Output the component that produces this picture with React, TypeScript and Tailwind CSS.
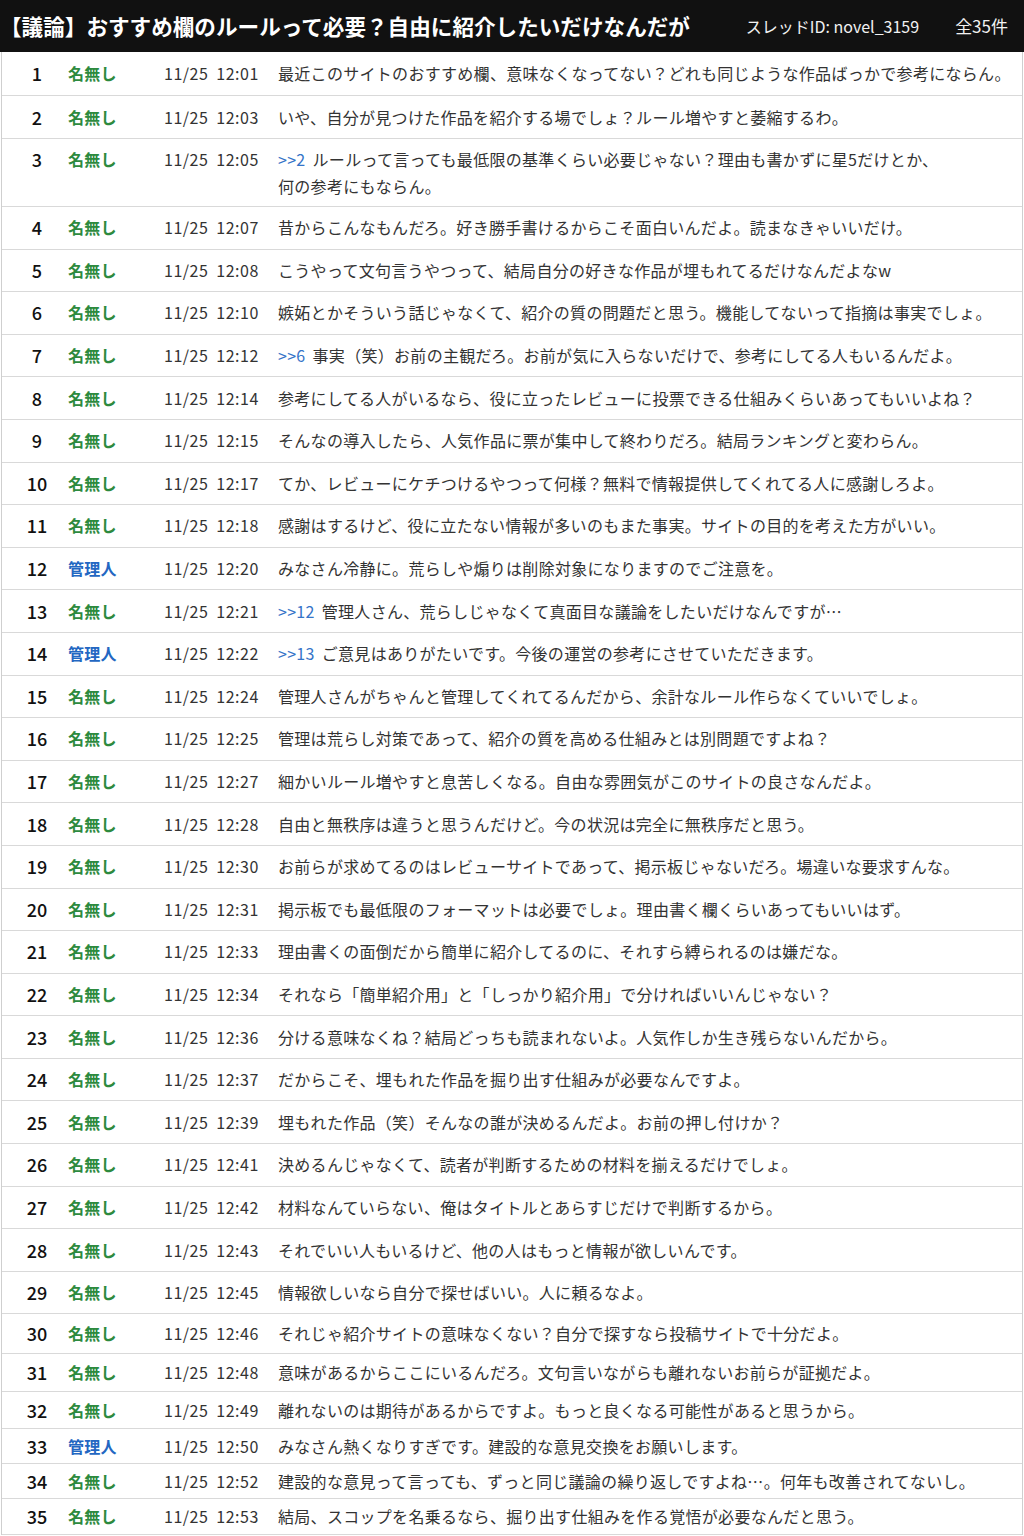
import React from "react";

type Post = {
  no: number;
  name: "名無し" | "管理人";
  time: string;
  anchor?: string;
  body: string;
  h: string;
};

const posts: Post[] = [
  { no: 1, name: "名無し", time: "12:01", body: "最近このサイトのおすすめ欄、意味なくなってない？どれも同じような作品ばっかで参考にならん。", h: "h-[44px]" },
  { no: 2, name: "名無し", time: "12:03", body: "いや、自分が見つけた作品を紹介する場でしょ？ルール増やすと萎縮するわ。", h: "h-[43px]" },
  { no: 3, name: "名無し", time: "12:05", anchor: ">>2", body: "ルールって言っても最低限の基準くらい必要じゃない？理由も書かずに星5だけとか、\n何の参考にもならん。", h: "h-[68px]" },
  { no: 4, name: "名無し", time: "12:07", body: "昔からこんなもんだろ。好き勝手書けるからこそ面白いんだよ。読まなきゃいいだけ。", h: "h-[42.6px]" },
  { no: 5, name: "名無し", time: "12:08", body: "こうやって文句言うやつって、結局自分の好きな作品が埋もれてるだけなんだよなw", h: "h-[42.6px]" },
  { no: 6, name: "名無し", time: "12:10", body: "嫉妬とかそういう話じゃなくて、紹介の質の問題だと思う。機能してないって指摘は事実でしょ。", h: "h-[42.6px]" },
  { no: 7, name: "名無し", time: "12:12", anchor: ">>6", body: "事実（笑）お前の主観だろ。お前が気に入らないだけで、参考にしてる人もいるんだよ。", h: "h-[42.6px]" },
  { no: 8, name: "名無し", time: "12:14", body: "参考にしてる人がいるなら、役に立ったレビューに投票できる仕組みくらいあってもいいよね？", h: "h-[42.6px]" },
  { no: 9, name: "名無し", time: "12:15", body: "そんなの導入したら、人気作品に票が集中して終わりだろ。結局ランキングと変わらん。", h: "h-[42.6px]" },
  { no: 10, name: "名無し", time: "12:17", body: "てか、レビューにケチつけるやつって何様？無料で情報提供してくれてる人に感謝しろよ。", h: "h-[42.6px]" },
  { no: 11, name: "名無し", time: "12:18", body: "感謝はするけど、役に立たない情報が多いのもまた事実。サイトの目的を考えた方がいい。", h: "h-[42.6px]" },
  { no: 12, name: "管理人", time: "12:20", body: "みなさん冷静に。荒らしや煽りは削除対象になりますのでご注意を。", h: "h-[42.6px]" },
  { no: 13, name: "名無し", time: "12:21", anchor: ">>12", body: "管理人さん、荒らしじゃなくて真面目な議論をしたいだけなんですが…", h: "h-[42.6px]" },
  { no: 14, name: "管理人", time: "12:22", anchor: ">>13", body: "ご意見はありがたいです。今後の運営の参考にさせていただきます。", h: "h-[42.6px]" },
  { no: 15, name: "名無し", time: "12:24", body: "管理人さんがちゃんと管理してくれてるんだから、余計なルール作らなくていいでしょ。", h: "h-[42.6px]" },
  { no: 16, name: "名無し", time: "12:25", body: "管理は荒らし対策であって、紹介の質を高める仕組みとは別問題ですよね？", h: "h-[42.6px]" },
  { no: 17, name: "名無し", time: "12:27", body: "細かいルール増やすと息苦しくなる。自由な雰囲気がこのサイトの良さなんだよ。", h: "h-[42.6px]" },
  { no: 18, name: "名無し", time: "12:28", body: "自由と無秩序は違うと思うんだけど。今の状況は完全に無秩序だと思う。", h: "h-[42.6px]" },
  { no: 19, name: "名無し", time: "12:30", body: "お前らが求めてるのはレビューサイトであって、掲示板じゃないだろ。場違いな要求すんな。", h: "h-[42.6px]" },
  { no: 20, name: "名無し", time: "12:31", body: "掲示板でも最低限のフォーマットは必要でしょ。理由書く欄くらいあってもいいはず。", h: "h-[42.6px]" },
  { no: 21, name: "名無し", time: "12:33", body: "理由書くの面倒だから簡単に紹介してるのに、それすら縛られるのは嫌だな。", h: "h-[42.6px]" },
  { no: 22, name: "名無し", time: "12:34", body: "それなら「簡単紹介用」と「しっかり紹介用」で分ければいいんじゃない？", h: "h-[42.6px]" },
  { no: 23, name: "名無し", time: "12:36", body: "分ける意味なくね？結局どっちも読まれないよ。人気作しか生き残らないんだから。", h: "h-[42.6px]" },
  { no: 24, name: "名無し", time: "12:37", body: "だからこそ、埋もれた作品を掘り出す仕組みが必要なんですよ。", h: "h-[42.6px]" },
  { no: 25, name: "名無し", time: "12:39", body: "埋もれた作品（笑）そんなの誰が決めるんだよ。お前の押し付けか？", h: "h-[42.6px]" },
  { no: 26, name: "名無し", time: "12:41", body: "決めるんじゃなくて、読者が判断するための材料を揃えるだけでしょ。", h: "h-[42.6px]" },
  { no: 27, name: "名無し", time: "12:42", body: "材料なんていらない、俺はタイトルとあらすじだけで判断するから。", h: "h-[42.6px]" },
  { no: 28, name: "名無し", time: "12:43", body: "それでいい人もいるけど、他の人はもっと情報が欲しいんです。", h: "h-[42.6px]" },
  { no: 29, name: "名無し", time: "12:45", body: "情報欲しいなら自分で探せばいい。人に頼るなよ。", h: "h-[42.6px]" },
  { no: 30, name: "名無し", time: "12:46", body: "それじゃ紹介サイトの意味なくない？自分で探すなら投稿サイトで十分だよ。", h: "h-[40px]" },
  { no: 31, name: "名無し", time: "12:48", body: "意味があるからここにいるんだろ。文句言いながらも離れないお前らが証拠だよ。", h: "h-[38px]" },
  { no: 32, name: "名無し", time: "12:49", body: "離れないのは期待があるからですよ。もっと良くなる可能性があると思うから。", h: "h-[37px]" },
  { no: 33, name: "管理人", time: "12:50", body: "みなさん熱くなりすぎです。建設的な意見交換をお願いします。", h: "h-[35px]" },
  { no: 34, name: "名無し", time: "12:52", body: "建設的な意見って言っても、ずっと同じ議論の繰り返しですよね…。何年も改善されてないし。", h: "h-[35px]" },
  { no: 35, name: "名無し", time: "12:53", body: "結局、スコップを名乗るなら、掘り出す仕組みを作る覚悟が必要なんだと思う。", h: "h-[36px]" },
];

function PostRow({ p }: { p: Post }) {
  const lines = p.body.split("\n");
  const multi = lines.length > 1;
  return (
    <div
      className={`${p.h} flex ${multi ? "items-start pt-[7px]" : "items-center"} border-b border-[#d9d9d9] leading-[27px]`}
    >
      <div className="w-[66px] shrink-0 pl-[4px] text-center text-[18px] font-medium text-[#111]">
        {p.no}
      </div>
      <div
        className={`w-[96px] shrink-0 text-[16px] font-semibold tracking-[0.3px] ${
          p.name === "管理人" ? "text-[#2367c2]" : "text-[#2d8a3e]"
        }`}
      >
        {p.name}
      </div>
      <div className="flex w-[114px] shrink-0 gap-[8px] text-[16px] tracking-[0.5px] text-[#333]">
        <span>11/25</span>
        <span>{p.time}</span>
      </div>
      <div className="min-w-0 flex-1 overflow-hidden whitespace-nowrap text-[16px] tracking-[0.3px] text-[#333]">
        {lines.map((line, i) => (
          <div key={i} className="flex">
            {i === 0 && p.anchor && <span className="mr-[7px] text-[#3574c8]">{p.anchor}</span>}
            <span>{line}</span>
          </div>
        ))}
      </div>
    </div>
  );
}

export default function App() {
  return (
    <div
      className="h-[1536px] w-[1024px] overflow-hidden bg-white"
      style={{ fontFamily: '"Noto Sans CJK JP", "Noto Sans", sans-serif' }}
    >
      <header className="flex h-[52px] items-center justify-between bg-[#111111] pr-[16px] text-white">
        <h1 className="text-[21.6px] font-bold">
          【議論】おすすめ欄のルールって必要？自由に紹介したいだけなんだが
        </h1>
        <div className="flex items-center gap-[36px] text-[16px] text-[#f2f2f2]">
          <span>スレッドID: novel_3159</span>
          <span className="text-[17px]">全35件</span>
        </div>
      </header>
      <main className="mx-[1px] border-x border-[#cfcfcf]">
        {posts.map((p) => (
          <PostRow key={p.no} p={p} />
        ))}
      </main>
    </div>
  );
}
